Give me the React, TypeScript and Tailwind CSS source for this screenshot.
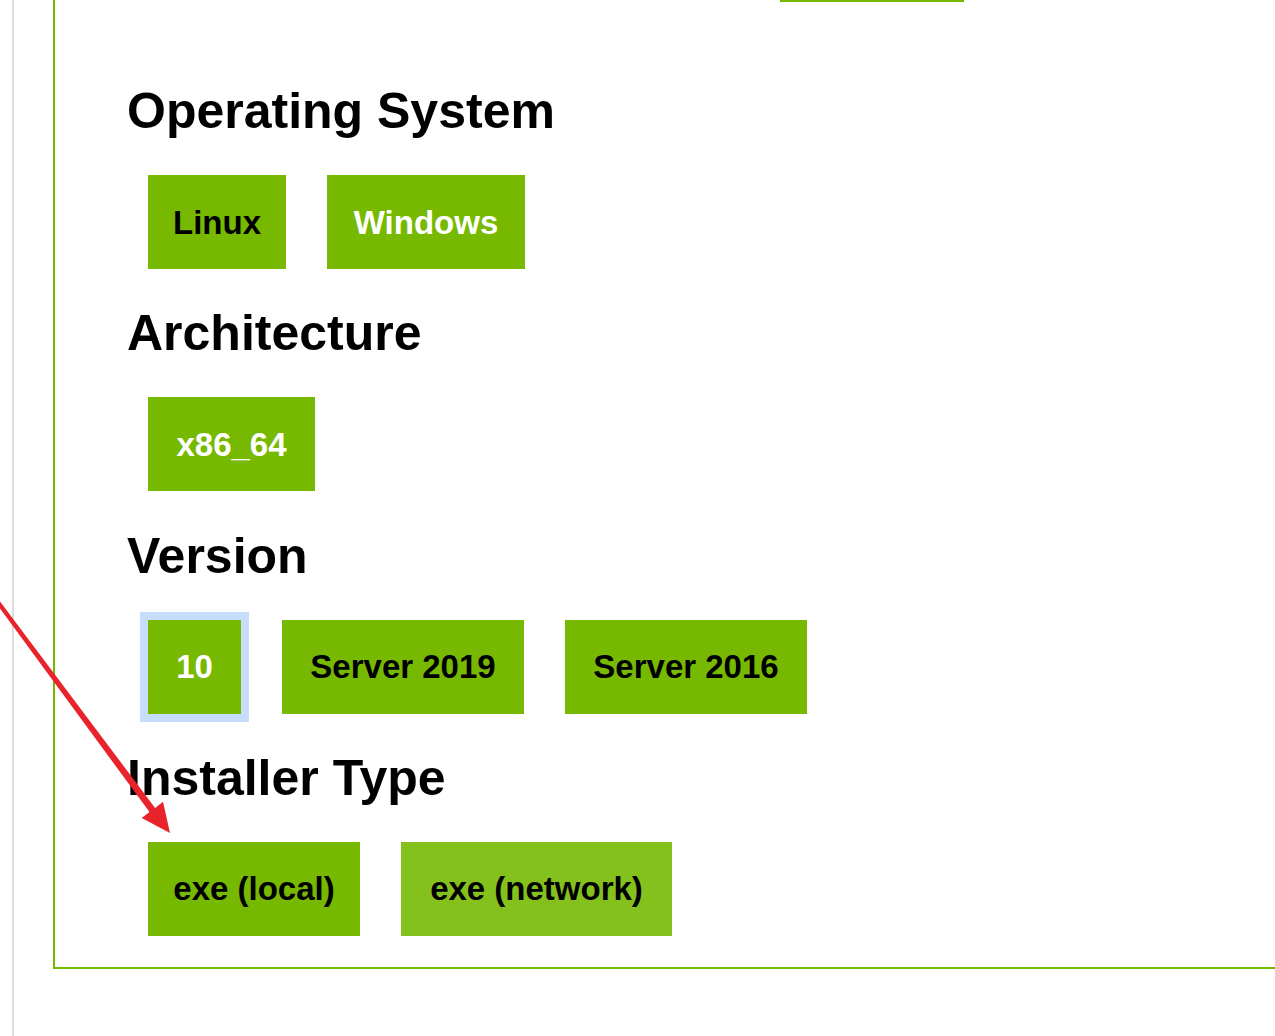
import React from "react";

type Opt = { label: string; w: string; tone?: "selected" | "idle" | "hover"; focus?: boolean };

const sections: { title: string; options: Opt[] }[] = [
  {
    title: "Operating System",
    options: [
      { label: "Linux", w: "w-[138px]" },
      { label: "Windows", w: "w-[198px]", tone: "selected" },
    ],
  },
  {
    title: "Architecture",
    options: [{ label: "x86_64", w: "w-[167px]", tone: "selected" }],
  },
  {
    title: "Version",
    options: [
      { label: "10", w: "w-[93px]", tone: "selected", focus: true },
      { label: "Server 2019", w: "w-[242px]" },
      { label: "Server 2016", w: "w-[242px]" },
    ],
  },
  {
    title: "Installer Type",
    options: [
      { label: "exe (local)", w: "w-[212px]" },
      { label: "exe (network)", w: "w-[271px]", tone: "hover" },
    ],
  },
];

function OptionButton({ opt }: { opt: Opt }) {
  const tone = opt.tone ?? "idle";
  return (
    <button
      className={[
        "flex h-[94px] items-center justify-center text-[33px] font-bold leading-none",
        opt.w,
        tone === "hover" ? "bg-[#85c11c]" : "bg-[#76b900]",
        tone === "selected" ? "text-white" : "text-black",
        opt.focus ? "ring-[8px] ring-[#c6ddfb]" : "",
      ].join(" ")}
    >
      {opt.label}
    </button>
  );
}

export default function App() {
  return (
    <div className="relative flex h-[1036px] w-full overflow-hidden bg-white font-['Liberation_Sans',Arial,sans-serif]">
      <div className="ml-[12px] h-full border-l-2 border-[#dcdcdc]" />
      <div className="ml-[39px] flex h-[969px] flex-1 flex-col border-b-2 border-l-2 border-[#76b900]">
        <div className="ml-[725px] h-[2px] w-[184px] shrink-0 bg-[#76b900]" />
        <div className="mt-[79px] flex shrink-0 flex-col pl-[72px]">
          {sections.map((s) => (
            <section key={s.title} className="mb-[34.33px] flex shrink-0 flex-col last:mb-0">
              <h2 className="mb-[34px] text-[50px] font-bold leading-[60px] text-black">{s.title}</h2>
              <div className="ml-[21px] flex gap-[41px]">
                {s.options.map((o) => (
                  <OptionButton key={o.label} opt={o} />
                ))}
              </div>
            </section>
          ))}
        </div>
      </div>

      {/* red annotation arrow */}
      <svg className="pointer-events-none absolute left-0 top-0" width="1275" height="1036" viewBox="0 0 1275 1036">
        <polygon
          points="-3.6,596.8 155.1,807.9 163,801.7 170,833 141.7,818 149.5,812.1 -6.8,599.2"
          fill="#e8232b"
        />
      </svg>
    </div>
  );
}
